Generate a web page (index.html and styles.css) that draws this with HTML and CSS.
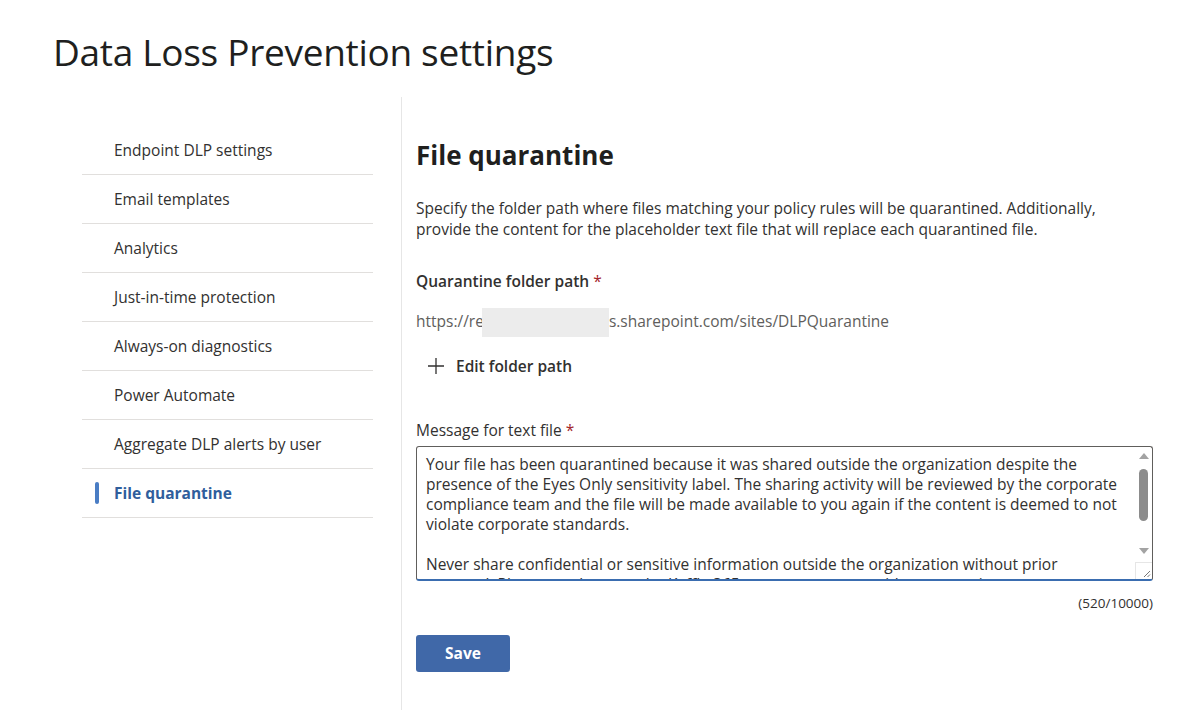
FILE: index.html
```html
<!DOCTYPE html>
<html lang="en">
<head>
  <meta charset="UTF-8" />
  <title>Data Loss Prevention settings</title>
  <link rel="stylesheet" href="styles.css">
</head>
<body>
<h1 class="page-title">Data Loss Prevention settings</h1>

<div class="layout">
  <nav class="side">
    <a class="side-item" href="#">Endpoint DLP settings</a>
    <a class="side-item" href="#">Email templates</a>
    <a class="side-item" href="#">Analytics</a>
    <a class="side-item" href="#">Just-in-time protection</a>
    <a class="side-item" href="#">Always-on diagnostics</a>
    <a class="side-item" href="#">Power Automate</a>
    <a class="side-item" href="#">Aggregate DLP alerts by user</a>
    <a class="side-item active" href="#">File quarantine</a>
  </nav>

  <main class="content">
    <h2 class="section-title">File quarantine</h2>
    <p class="desc">Specify the folder path where files matching your policy rules will be quarantined. Additionally,<br>provide the content for the placeholder text file that will replace each quarantined file.</p>

    <div class="field-label">Quarantine folder path <span class="req">*</span></div>
    <div class="path">https://re<span class="blur"></span>s.sharepoint.com/sites/DLPQuarantine</div>

    <button class="link-btn" type="button">
      <svg width="18" height="18" viewBox="0 0 18 18"><path d="M9 1v16M1 9h16" stroke="#323130" stroke-width="1.3" fill="none"/></svg>
      Edit folder path
    </button>

    <div class="field-label msg-label">Message for text file <span class="req">*</span></div>
    <div class="textbox">
      <div class="textbox-text">Your file has been quarantined because it was shared outside the organization despite the
presence of the Eyes Only sensitivity label. The sharing activity will be reviewed by the corporate
compliance team and the file will be made available to you again if the content is deemed to not
violate corporate standards.

Never share confidential or sensitive information outside the organization without prior
approval. Please reach out to the Kaffle 365 governance team with any questions.</div>
      <div class="scroll">
        <span class="arrow up"></span>
        <span class="thumb"></span>
        <span class="arrow down"></span>
        <span class="grip">
          <svg width="16" height="16" viewBox="0 0 16 16"><path d="M14 8L8 14M14 11.5L11.5 14" stroke="#777" stroke-width="1" fill="none"/></svg>
        </span>
      </div>
    </div>
    <div class="counter">(520/10000)</div>

    <button class="save" type="button">Save</button>
  </main>
</div>
</body>
</html>
```

FILE: styles.css
```css
body { margin: 0; font-family: "Open Sans", "Noto Sans", Arial, sans-serif; color: #323130; background: #fff; }

.page-title { margin: 0; padding: 27px 0 0 53px; font-size: 37px; font-weight: 400; line-height: 50px; color: #201f1e; letter-spacing: -0.3px; }

.layout { display: flex; margin-top: 20px; min-height: 613px; }

.side { width: 291px; margin-left: 82px; padding-top: 29px; padding-right: 28px; border-right: 1px solid #e6e6e6; }
.side-item { display: block; position: relative; height: 48px; line-height: 48px; padding-left: 32px; border-bottom: 1px solid #e1dfdd; color: #323130; text-decoration: none; font-size: 15.5px; }
.side-item.active { color: #2f5e9c; font-weight: 700; }
.side-item.active::before { content: ""; position: absolute; left: 13px; top: 13px; width: 4px; height: 22px; border-radius: 2px; background: #4a7dc4; }

.content { padding-left: 14px; width: 737px; }

.section-title { margin: 41px 0 0; font-size: 26px; font-weight: 700; line-height: 34px; color: #201f1e; }

.desc { margin: 26px 0 0; font-size: 15.5px; line-height: 21px; }

.field-label { margin-top: 30px; font-size: 15.5px; font-weight: 600; line-height: 22px; }
.req { color: #a4262c; font-weight: 400; }

.path { margin-top: 18px; font-size: 15.5px; line-height: 22px; color: #605e5c; }
.blur { display: inline-block; width: 127px; height: 29px; vertical-align: middle; margin: -4px 0 -3px -2px; background: #ececec; }

.link-btn { display: flex; align-items: center; gap: 11px; margin-top: 21px; padding: 0 0 0 11px; border: 0; background: none; font: inherit; font-size: 15.5px; font-weight: 600; color: #323130; line-height: 22px; }

.msg-label { margin-top: 42px; font-weight: 400; }

.textbox { position: relative; margin-top: 5px; height: 132px; border: 1px solid #605e5c; border-bottom: 2px solid #3a6db0; border-radius: 3px; overflow: hidden; }
.textbox-text { padding: 7px 28px 0 9px; font-size: 15.5px; line-height: 20px; white-space: pre-line; color: #323130; }

.scroll { position: absolute; top: 0; right: 0; bottom: 0; width: 17px; }
.arrow { position: absolute; left: 4px; width: 0; height: 0; border-left: 5px solid transparent; border-right: 5px solid transparent; }
.arrow.up { top: 6px; border-bottom: 6px solid #a3a3a3; }
.arrow.down { top: 101px; border-top: 6px solid #a3a3a3; }
.thumb { position: absolute; left: 4px; top: 22px; width: 9px; height: 52px; border-radius: 5px; background: #8c8c8c; }
.grip { position: absolute; right: 0; bottom: 0; width: 16px; height: 16px; border-top: 1px solid #e6e6e6; border-left: 1px solid #e6e6e6; background: #fff; }
.grip svg { display: block; }

.counter { margin-top: 13px; text-align: right; font-size: 13.5px; line-height: 18px; color: #323130; }

.save { display: block; margin-top: 23px; width: 94px; height: 37px; border: 0; border-radius: 3px; background: #4068a8; color: #fff; font: inherit; font-size: 15.5px; font-weight: 700; }
```
